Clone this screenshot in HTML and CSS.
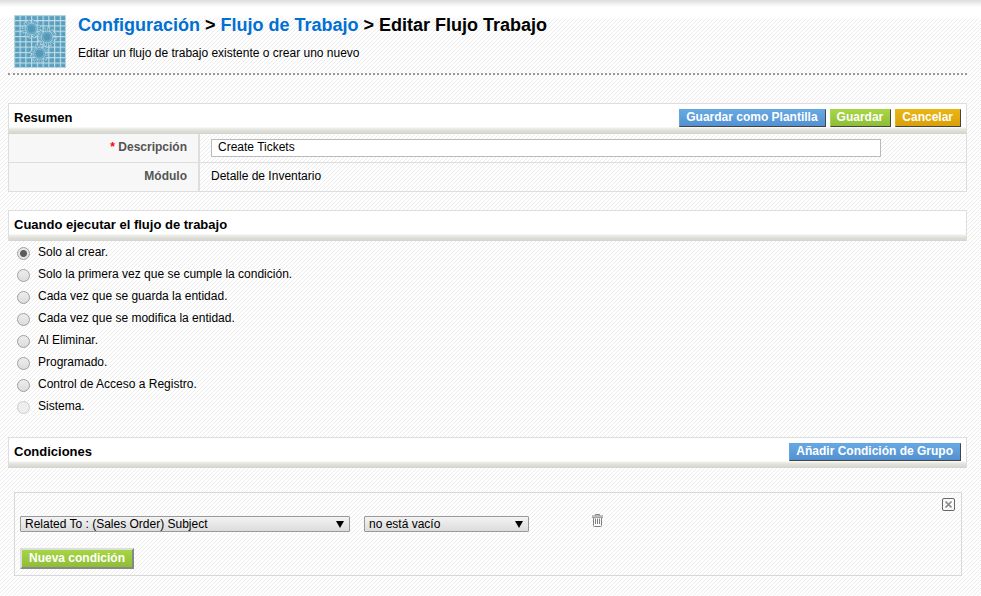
FILE: index.html
```
<!DOCTYPE html>
<html lang="es">
<head>
<meta charset="utf-8">
<title>Editar Flujo Trabajo</title>
<link rel="stylesheet" href="styles.css">
</head>
<body>
<main class="page">
  <header class="page-header">
    <svg class="page-icon" viewBox="0 0 52 53" aria-hidden="true">
      <defs>
        <pattern id="grid" width="5.75" height="5.3" patternUnits="userSpaceOnUse" x="-0.2" y="-0.2">
          <path d="M0 0.6H5.75M0.6 0V5.3" stroke="#c3dfe9" stroke-width="1.1" fill="none"/>
        </pattern>
        <g id="gear">
          <circle r="7.8" fill="none" stroke="#a9d0df" stroke-width="3.8" stroke-dasharray="2.4 1.684"/>
          <circle r="7.4" fill="none" stroke="#5b9fbe" stroke-width="2.6" stroke-dasharray="1.2 2.674" stroke-dashoffset="-.6"/>
          <circle r="5.8" fill="#5b9fbe" stroke="#a5cddc" stroke-width=".8"/>
          <circle r="4.2" fill="#5399ba" stroke="#86b9ce" stroke-width=".8"/>
        </g>
      </defs>
      <path fill="#5b9fbe" d="M0 0H52V53H0z"/>
      <path fill="url(#grid)" d="M0 0H52V53H0z"/>
      <path fill="none" stroke="#b4d5e2" d="M.5 .5H51.5V52.5H.5z"/>
      <use href="#gear" x="17.5" y="14"/>
      <use href="#gear" x="33" y="22"/>
      <use href="#gear" x="25.500" y="38.500"/>
    </svg>
    <div>
      <h1 class="title"><a href="#">Configuración</a> &gt; <a href="#">Flujo de Trabajo</a> &gt; Editar Flujo Trabajo</h1>
      <p class="subtitle">Editar un flujo de trabajo existente o crear uno nuevo</p>
    </div>
  </header>

  <section class="section">
    <div class="bar">
      <h2>Resumen</h2>
      <div class="actions">
        <button class="btn blue" type="button">Guardar como Plantilla</button>
        <button class="btn green" type="button">Guardar</button>
        <button class="btn orange" type="button">Cancelar</button>
      </div>
    </div>
    <div class="fields">
      <label class="name" for="description"><span class="required">*</span> Descripción</label>
      <div class="value"><input class="text" id="description" type="text" value="Create Tickets"></div>
      <div class="name">Módulo</div>
      <div class="value">Detalle de Inventario</div>
    </div>
  </section>

  <section class="section">
    <div class="bar"><h2>Cuando ejecutar el flujo de trabajo</h2></div>
    <div class="options">
      <label class="option"><input type="radio" name="when" checked><span>Solo al crear.</span></label>
      <label class="option"><input type="radio" name="when"><span>Solo la primera vez que se cumple la condición.</span></label>
      <label class="option"><input type="radio" name="when"><span>Cada vez que se guarda la entidad.</span></label>
      <label class="option"><input type="radio" name="when"><span>Cada vez que se modifica la entidad.</span></label>
      <label class="option"><input type="radio" name="when"><span>Al Eliminar.</span></label>
      <label class="option"><input type="radio" name="when"><span>Programado.</span></label>
      <label class="option"><input type="radio" name="when"><span>Control de Acceso a Registro.</span></label>
      <label class="option"><input type="radio" name="when" disabled><span>Sistema.</span></label>
    </div>
  </section>

  <section class="section">
    <div class="bar">
      <h2>Condiciones</h2>
      <div class="actions"><button class="btn blue" type="button">Añadir Condición de Grupo</button></div>
    </div>
    <div class="group">
      <div class="group-top">
        <button class="icon-btn" type="button" aria-label="Cerrar">
          <svg width="13" height="13" viewBox="0 0 13 13" fill="none" stroke="#666">
            <rect x=".5" y=".5" width="12" height="12" rx="1.500"/>
            <path stroke="#888" stroke-width="1.700" d="M3.500 3.500l6 6M9.500 3.500l-6 6"/>
          </svg>
        </button>
      </div>
      <div class="condition">
        <div class="select field"><select aria-label="Campo"><option>Related To : (Sales Order) Subject</option></select></div>
        <div class="select operator"><select aria-label="Operador"><option>no está vacío</option></select></div>
        <button class="icon-btn trash" type="button" aria-label="Eliminar">
          <svg width="11" height="13" viewBox="0 0 11 13" fill="none" stroke="#808080">
            <path d="M3.500 1.500V.5h4v1M0 2h11M1.500 4v7.500q0 1 1 1h6q1 0 1-1V4M3.500 4.500v5.500M5.500 4.500v5.500M7.500 4.500v5.500"/>
            <path stroke="#a5a5a5" d="M0 3.500h11"/>
          </svg>
        </button>
      </div>
      <button class="btn green large" type="button">Nueva condición</button>
    </div>
  </section>
</main>
</body>
</html>
```
FILE: styles.css
```
* { box-sizing: border-box; }

body {
  margin: 0;
  color: #000;
  font: 12px/16px "Liberation Sans", Arial, sans-serif;
  background:
    linear-gradient(#dedede, #fff 7px, #fff 18px, transparent 19px) no-repeat,
    linear-gradient(135deg, #ececec 12.5%, transparent 12.5% 50%, #ececec 50% 62.5%, transparent 62.5%) 0 0 / 4px 4px,
    #fff;
}

h1, h2, p { margin: 0; }

.page { padding: 15px 14px 20px 8px; }

.page-header {
  display: flex;
  gap: 12px;
  padding: 0 0 5px 6px;
  border-bottom: 2px dotted #999;
}
.page-icon { width: 52px; height: 53px; }
.title { font-size: 18px; line-height: 20px; }
.title a { color: #0070d2; text-decoration: none; }
.subtitle { margin-top: 10px; }

.section { margin-top: 18px; }
.page-header + .section { margin-top: 28px; }

.bar {
  display: flex;
  align-items: flex-start;
  justify-content: space-between;
  min-height: 31px;
  padding: 5px 5px 0;
  border: 1px solid #dedede;
  border-bottom-color: #d5d5d0;
  background: linear-gradient(#fff 23px, #f0f0eb 24px, #deded9 27px, #d5d5d0 30px);
}
.bar h2 { font-size: 13px; line-height: 18px; }
.actions { display: flex; gap: 4px; }

.btn {
  height: 18px;
  padding: 0 7px 2px 6px;
  border: 1px solid;
  color: #fff;
  font: bold 12px/14px "Liberation Sans", Arial, sans-serif;
}
.blue { background: linear-gradient(#66a8e4, #5390d0); border-color: #66a6e0 #444 #444 #66a6e0; }
.green { background: linear-gradient(#a6d545, #8fbd36); border-color: #a6d545 #444 #444 #a6d545; }
.orange { background: linear-gradient(#eab512, #d9a00b); border-color: #eab512 #444 #444 #eab512; }
.large {
  display: block;
  height: 21px;
  padding: 0 7px 2px;
  border-width: 2px;
  border-color: #ddd #888 #888 #ddd;
}

.fields {
  display: grid;
  grid-template-columns: 191px 1fr;
  border: solid #dedede;
  border-width: 0 1px;
}
.name, .value { height: 29px; border-bottom: 1px solid #dedede; }
.name {
  padding: 5px 11px 0 0;
  border-right: 2px solid #dedede;
  background: #f7f7f7;
  color: #545454;
  font-weight: bold;
  text-align: right;
}
.required { color: #f00; }
.value { padding: 5px 11px 0; }
.text {
  display: block;
  width: 90%;
  height: 18px;
  padding: 0 6px 2px;
  border: 1px solid #bababa;
  background: #fff;
  color: #000;
  font: inherit;
}

.options { display: grid; gap: 6px; padding: 3px 9px 5px; }
.option { display: flex; gap: 8px; height: 16px; }
.option input {
  appearance: none;
  flex: none;
  width: 13px;
  height: 13px;
  margin: 3px 0 0;
  border: 1px solid #a0a0a0;
  border-radius: 50%;
  background: linear-gradient(#ededed, #dcdcdc);
}
.option input:checked { background: radial-gradient(circle, #5c5c5c 3px, #e6e6e6 4px); }
.option input:disabled { border-color: #ccc; background: #eee; }

.group {
  margin: 24px 5px 0 6px;
  padding: 5px 5px 6px;
  border: 1px solid #d8d8d8;
}
.group-top { display: flex; justify-content: flex-end; height: 16px; padding-right: 1px; }
.icon-btn { display: flex; height: 13px; padding: 0; border: 0; background: none; }
.condition { display: flex; align-items: flex-start; gap: 14px; height: 34px; }
.select { position: relative; height: 16px; margin-top: 2px; }
.select::after {
  content: "";
  position: absolute;
  top: 5px;
  right: 6px;
  border: solid transparent;
  border-width: 7px 4px 0;
  border-top-color: #000;
  pointer-events: none;
}
.field { width: 330px; }
.operator { width: 165px; }
.select select {
  appearance: none;
  display: block;
  width: 100%;
  height: 16px;
  padding: 0 16px 0 4px;
  border: 1px solid #999;
  border-radius: 1px;
  background: linear-gradient(#f3f3f3, #dcdcdc);
  color: #000;
  font: 12px/14px "Liberation Sans", Arial, sans-serif;
}
.trash { margin-left: 49px; }
```
